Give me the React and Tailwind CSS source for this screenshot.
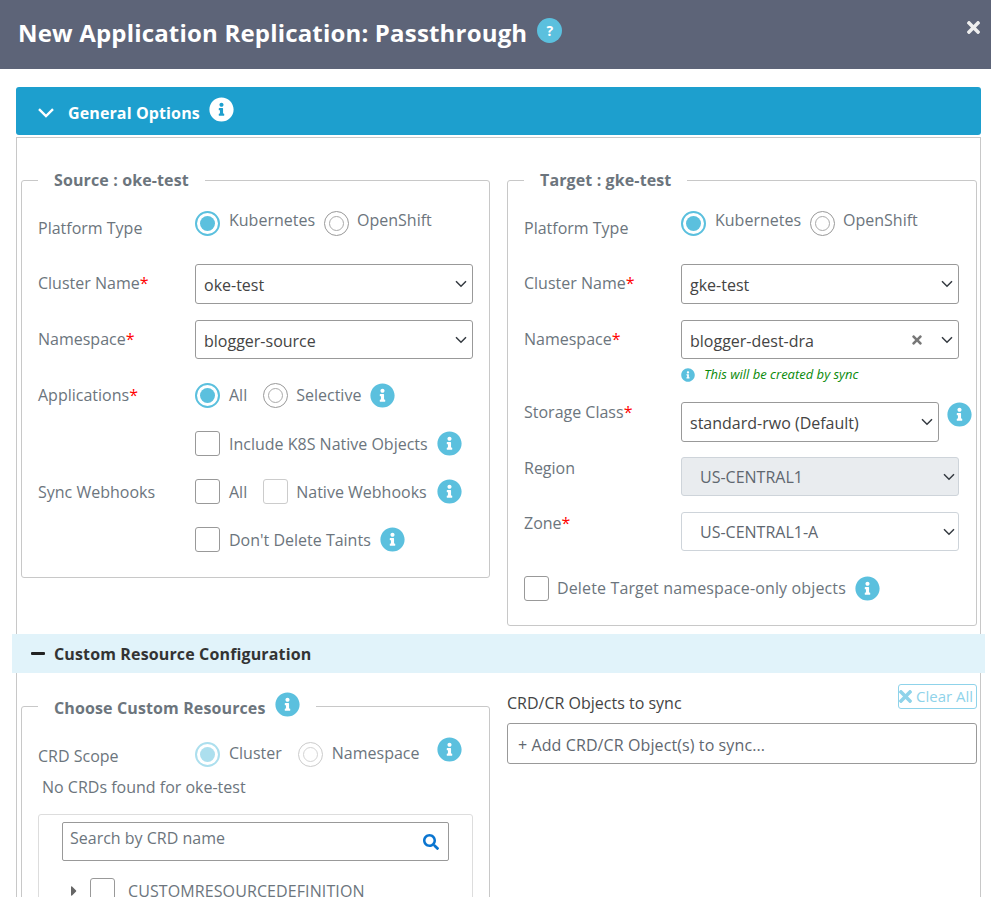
import React from 'react';
import { FaInfoCircle, FaTimes, FaSearch, FaCaretRight } from 'react-icons/fa';

const Info = ({ className = '' }) => (
  <FaInfoCircle className={`text-[#5bc0de] shrink-0 ${className}`} size={25} />
);

const Chevron = ({ className = '' }) => (
  <svg width="12" height="8" viewBox="0 0 12 8" fill="none" stroke="#343a40" strokeWidth="1.5" className={`shrink-0 ${className}`}>
    <path d="M1 1.2 L6 6.2 L11 1.2" />
  </svg>
);

const Radio = ({ on, dim }) => (
  <span className={`flex items-center justify-center w-[25px] h-[25px] rounded-full shrink-0 bg-white border ${on ? 'border-2 border-[#5bc0de]' : 'border-[#999]'} ${dim ? 'opacity-50' : ''}`}>
    {on ? (
      <span className="w-[15px] h-[15px] rounded-full bg-[#5bc0de]" />
    ) : (
      <span className="w-[15px] h-[15px] rounded-full border border-[#aaa]" />
    )}
  </span>
);

const Check = ({ light }) => (
  <span className={`block w-[25px] h-[25px] rounded-[3px] shrink-0 border bg-white ${light ? 'border-[#ccc]' : 'border-[#999]'}`} />
);

const Label = ({ children, req, className = '' }) => (
  <div className={`w-[157px] shrink-0 leading-[20px] ${className}`}>
    {children}
    {req && <span className="text-[#ff0000]">*</span>}
  </div>
);

const Select = ({ value, className = '', clear, h = 'h-[40px]' }) => (
  <div className={`flex items-center shrink-0 ${h} border border-[#999] rounded-[3px] pl-2 pr-[5px] text-[#444] bg-white ${className}`}>
    <span className="flex-1 pt-[2px]">{value}</span>
    {clear && <FaTimes size={14} className="text-[#777] mr-[17px]" />}
    <Chevron />
  </div>
);

const Native = ({ value, disabled }) => (
  <div className={`flex items-center h-[39px] border rounded-[3px] pl-[18px] pr-[3px] text-[#5f6770] w-[278px] ${disabled ? 'bg-[#e9ecef] border-[#ced4da]' : 'bg-white border-[#ced4da]'}`}>
    <span className="flex-1">{value}</span>
    <Chevron />
  </div>
);

const Legend = ({ children }) => (
  <legend className="px-4 h-[20px] leading-[20px] text-[16px] font-bold tracking-[0.12px] text-[#6c757d] flex items-center">
    {children}
  </legend>
);

const App = () => {
  return (
    <div className="w-[991px] h-[897px] overflow-hidden bg-white text-[16px] text-[#6c757d] font-['Open_Sans',sans-serif]">
      <header className="h-[69px] bg-[#5d6478] flex items-start pl-[18px] pr-[8px]">
        <h1 className="text-[24px] leading-[33px] font-bold tracking-[0.18px] text-white mt-[16px]">New Application Replication: Passthrough</h1>
        <span className="flex items-center justify-center w-[25px] h-[25px] rounded-full bg-[#5bc0de] text-white text-[14px] font-bold ml-[10px] mt-[18px]">?</span>
        <FaTimes size={19} className="text-[#eeeeee] ml-auto mt-[18px]" />
      </header>

      <div className="ml-4 w-[965px] mt-[18px]">
        <div className="h-[48px] bg-[#1d9fce] rounded-[3px] flex items-center pl-[22px] text-white font-bold">
          <svg width="16" height="10" viewBox="0 0 16 10" fill="none" stroke="white" strokeWidth="2.4" className="mt-[4px]">
            <path d="M1 1.2 L8 8 L15 1.2" />
          </svg>
          <span className="ml-[14px] mt-[4px] leading-[22px] tracking-[0.12px]">General Options</span>
          <FaInfoCircle size={25} className="ml-[9px] mb-[3px]" />
        </div>

        <div className="mt-[2px] border border-b-0 border-[#c8c8c8] h-[760px]">
          <div className="grid grid-cols-[469px_470px] gap-x-[17px] pl-1 pt-[32px]">
            {/* source */}
            <fieldset className="border border-[#c8c8c8] rounded-[3px] h-[408px] px-4 min-w-0">
              <Legend>Source : oke-test</Legend>
              <div className="flex mt-[19px]">
                <Label className="pt-[9px]">Platform Type</Label>
                <div className="flex items-center">
                  <Radio on />
                  <span className="ml-[9px] -mt-[7px]">Kubernetes</span>
                  <span className="ml-[9px]"><Radio /></span>
                  <span className="ml-[8px] -mt-[7px]">OpenShift</span>
                </div>
              </div>
              <div className="flex mt-[26px]">
                <Label className="pt-[9px]" req>Cluster Name</Label>
                <Select value="oke-test" className="w-[278px]" />
              </div>
              <div className="flex mt-[16px]">
                <Label className="pt-[9px]" req>Namespace</Label>
                <Select value="blogger-source" className="w-[278px]" h="h-[39px]" />
              </div>
              <div className="flex mt-[24px]">
                <Label className="pt-[2px]" req>Applications</Label>
                <div className="flex items-center">
                  <Radio on />
                  <span className="ml-[9px] mr-[16px] -mt-[2px]">All</span>
                  <Radio />
                  <span className="ml-[8px] -mt-[2px]">Selective</span>
                  <Info className="ml-[9px]" />
                </div>
              </div>
              <div className="flex items-center ml-[157px] mt-[23px]">
                <Check />
                <span className="ml-[9px]">Include K8S Native Objects</span>
                <Info className="ml-[9px]" />
              </div>
              <div className="flex mt-[23px]">
                <Label className="pt-[3px]">Sync Webhooks</Label>
                <div className="flex items-center">
                  <Check />
                  <span className="ml-[9px] mr-[16px]">All</span>
                  <Check light />
                  <span className="ml-[8px]">Native Webhooks</span>
                  <Info className="ml-[10px]" />
                </div>
              </div>
              <div className="flex items-center ml-[157px] mt-[23px]">
                <Check />
                <span className="ml-[9px]">Don't Delete Taints</span>
                <Info className="ml-[9px]" />
              </div>
            </fieldset>

            {/* target */}
            <fieldset className="border border-[#c8c8c8] rounded-[3px] h-[456px] px-4 min-w-0">
              <Legend>Target : gke-test</Legend>
              <div className="flex mt-[19px]">
                <Label className="pt-[9px]">Platform Type</Label>
                <div className="flex items-center">
                  <Radio on />
                  <span className="ml-[9px] -mt-[7px]">Kubernetes</span>
                  <span className="ml-[9px]"><Radio /></span>
                  <span className="ml-[8px] -mt-[7px]">OpenShift</span>
                </div>
              </div>
              <div className="flex mt-[26px]">
                <Label className="pt-[9px]" req>Cluster Name</Label>
                <Select value="gke-test" className="w-[278px]" />
              </div>
              <div className="flex mt-[16px]">
                <Label className="pt-[9px]" req>Namespace</Label>
                <Select value="blogger-dest-dra" className="w-[278px]" h="h-[39px]" clear />
              </div>
              <div className="flex items-center ml-[157px] mt-[8px] h-[16px] text-[13px] italic text-[#0a8a0a]">
                <FaInfoCircle size={14} className="text-[#5bc0de] mr-[9px] not-italic" />
                This will be created by sync
              </div>
              <div className="flex mt-[19px]">
                <Label req>Storage Class</Label>
                <Select value="standard-rwo (Default)" className="w-[258px]" />
                <Info className="ml-[8px]" />
              </div>
              <div className="flex mt-[15px]">
                <Label className="pt-[1px]">Region</Label>
                <Native value="US-CENTRAL1" disabled />
              </div>
              <div className="flex mt-[16px]">
                <Label className="pt-[1px]" req>Zone</Label>
                <Native value="US-CENTRAL1-A" />
              </div>
              <div className="flex items-center mt-[25px]">
                <Check />
                <span className="ml-[8px] -mt-[1px] tracking-[0.14px]">Delete Target namespace-only objects</span>
                <Info className="ml-[9px]" />
              </div>
            </fieldset>
          </div>

          <div className="-mx-[5px] mt-[8px] h-[39px] bg-[#e1f3fa] flex items-center pl-[19px] text-[#333] font-bold text-[16px]">
            <span className="block w-[14px] h-[3px] rounded-[1px] bg-[#222]" />
            <span className="ml-[9px] tracking-[0.14px]">Custom Resource Configuration</span>
          </div>

          <div className="grid grid-cols-[469px_470px] gap-x-[17px] pl-1 pt-[10px]">
            <fieldset className="border border-[#c8c8c8] rounded-[3px] h-[400px] mt-[13px] px-4 min-w-0">
              <Legend>
                <span className="mt-[3px]">Choose Custom Resources</span>
                <FaInfoCircle size={25} className="text-[#5bc0de] ml-[9px] -mt-[3px]" />
              </Legend>
              <div className="flex mt-[30px] h-[30px]">
                <Label>CRD Scope</Label>
                <div className="flex items-start">
                  <span className="mt-[-4px]"><Radio on dim /></span>
                  <span className="ml-[9px] -mt-[5px]">Cluster</span>
                  <span className="ml-[16px] mt-[-4px]"><Radio dim /></span>
                  <span className="ml-[9px] -mt-[5px]">Namespace</span>
                  <Info className="ml-[18px] -mt-[9px]" />
                </div>
              </div>
              <div className="ml-[4px] leading-[22px]">No CRDs found for oke-test</div>
              <div className="mt-[16px] border border-[#ddd] rounded-[3px] h-[120px] pt-[7px] pl-[23px]">
                <div className="flex w-[387px] h-[39px] border border-[#999] rounded-[2px] pl-[7px] pr-[9px]">
                  <span className="flex-1 leading-[30px]">Search by CRD name</span>
                  <FaSearch size={16} className="text-[#0a75d0] mt-[11px]" />
                </div>
                <div className="flex items-center ml-[4px] mt-[17px]">
                  <FaCaretRight size={16} className="text-[#666]" />
                  <span className="ml-[8px]"><Check /></span>
                  <span className="ml-[13px] text-[16px] tracking-[0.1px]">CUSTOMRESOURCEDEFINITION</span>
                </div>
              </div>
            </fieldset>

            <div className="-mt-[10px] pt-[11px]">
              <div className="flex items-start h-[39px]">
                <span className="flex-1 mt-[9px] leading-[20px] text-[#444]">CRD/CR Objects to sync</span>
                <button className="flex items-center w-[79px] h-[25px] border border-[#8fd3ea] rounded-[3px] text-[15px] text-[#8fd3ea]">
                  <FaTimes size={19} className="-ml-[3px] mr-[1px]" />
                  Clear All
                </button>
              </div>
              <div className="h-[41px] border border-[#999] rounded-[3px] flex items-center pl-[10px] pt-[2px] text-[16px] tracking-[0.1px] text-[#5f6770]">
                + Add CRD/CR Object(s) to sync...
              </div>
            </div>
          </div>
        </div>
      </div>
    </div>
  );
};

export default App;
